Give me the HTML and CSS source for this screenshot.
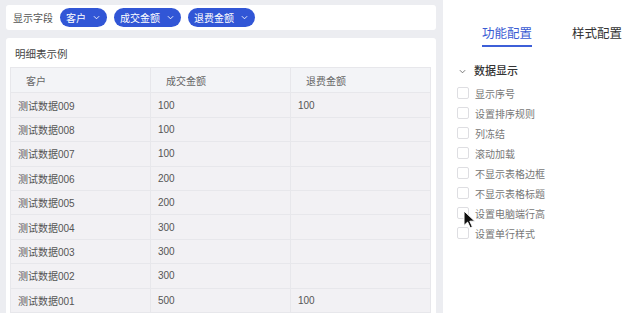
FILE: index.html
```html
<!DOCTYPE html>
<html lang="zh-CN">
<head>
  <meta charset="UTF-8" />
  <meta name="viewport" content="width=device-width, initial-scale=1.0"/>
  <title>明细表配置</title>
  <link rel="stylesheet" href="styles.css">
</head>
<body>
  <div class="main">
    <div class="field-bar">
      <span class="field-label">显示字段</span>
      <span class="pill">客户<svg class="chev" viewBox="0 0 8 5"><path d="M1 1l3 3 3-3"/></svg></span>
      <span class="pill">成交金额<svg class="chev" viewBox="0 0 8 5"><path d="M1 1l3 3 3-3"/></svg></span>
      <span class="pill">退费金额<svg class="chev" viewBox="0 0 8 5"><path d="M1 1l3 3 3-3"/></svg></span>
    </div>

    <div class="detail-card">
      <div class="detail-title">明细表示例</div>
      <table class="detail-table">
        <thead>
          <tr><th>客户</th><th>成交金额</th><th>退费金额</th></tr>
        </thead>
        <tbody id="rows"></tbody>
      </table>
    </div>
  </div>

  <div class="side">
    <div class="tabs">
      <span class="tab active">功能配置</span>
      <span class="tab">样式配置</span>
    </div>
    <div class="group-title">
      <svg class="group-chev" viewBox="0 0 8 5"><path d="M1 1l3 3 3-3"/></svg>
      数据显示
    </div>
    <ul class="options" id="options"></ul>
  </div>

  <svg class="cursor" viewBox="0 0 12 19" width="12" height="19">
    <path d="M1 1v14.5l3.6-3.4 2.6 5.7 2.2-1-2.6-5.6h5z" fill="#111" stroke="#fff" stroke-width="1"/>
  </svg>

  <script>
    const rows = [
      ["测试数据009", "100", "100"],
      ["测试数据008", "100", ""],
      ["测试数据007", "100", ""],
      ["测试数据006", "200", ""],
      ["测试数据005", "200", ""],
      ["测试数据004", "300", ""],
      ["测试数据003", "300", ""],
      ["测试数据002", "300", ""],
      ["测试数据001", "500", "100"]
    ];

    const options = ["显示序号", "设置排序规则", "列冻结", "滚动加载", "不显示表格边框", "不显示表格标题", "设置电脑端行高", "设置单行样式"];

    const tbody = document.getElementById("rows");
    rows.forEach(r => {
      const tr = document.createElement("tr");
      r.forEach(v => {
        const td = document.createElement("td");
        td.textContent = v;
        tr.appendChild(td);
      });
      tbody.appendChild(tr);
    });

    // 配置项列表
    const list = document.getElementById("options");
    options.forEach(text => {
      const li = document.createElement("li");
      li.innerHTML = '<span class="box"></span><span>' + text + '</span>';
      list.appendChild(li);
    });
  </script>
</body>
</html>
```

FILE: styles.css
```css
body {
  margin: 0;
  height: 313px;
  overflow: hidden;
  background-color: #ecedf1;
  font-family: "Liberation Sans", "Noto Sans CJK SC", sans-serif;
  display: flex;
  position: relative;
}
.main {
  width: 430px;
  flex-shrink: 0;
  padding: 5px 0 0 6px;
  display: flex;
  flex-direction: column;
  gap: 8px;
}
.field-bar {
  height: 26px;
  background: #fff;
  border-radius: 3px;
  display: flex;
  align-items: center;
  gap: 7px;
  padding: 0 7px;
}
.field-label {
  font-size: 10px;
  color: #555;
}
.pill {
  height: 19px;
  border-radius: 10px;
  background: #3156d6;
  color: #fff;
  font-size: 10px;
  display: flex;
  align-items: center;
  gap: 7px;
  padding: 0 7px 0 6px;
}
.chev {
  width: 7px;
  height: 5px;
  fill: none;
  stroke: #fff;
  stroke-width: 1;
}
.detail-card {
  flex: 1;
  background: #fff;
  border-radius: 3px 3px 0 0;
  padding: 10px 5px 0 4px;
}
.detail-title {
  font-size: 10.5px;
  color: #444;
  line-height: 12px;
  padding-left: 5px;
  margin-bottom: 7px;
}
.detail-table {
  width: 421px;
  border-collapse: collapse;
  table-layout: fixed;
  font-size: 10px;
}
.detail-table th,
.detail-table td {
  border: 1px solid #e7e7eb;
  text-align: left;
  font-weight: normal;
  white-space: nowrap;
}
.detail-table th {
  height: 24px;
  background: #f3f4f7;
  color: #666;
  padding: 0 15px;
}
.detail-table td {
  height: 23.4px;
  background: #f2f1f4;
  color: #555;
  padding: 0 7px;
}
.side {
  flex: 1;
  margin-left: 7px;
  background: #fff;
}
.tabs {
  display: flex;
  gap: 40px;
  padding: 27px 0 0 39px;
}
.tab {
  font-size: 12.5px;
  line-height: 14px;
  color: #333;
  padding-bottom: 4px;
  border-bottom: 2px solid transparent;
}
.tab.active {
  color: #3a5bd3;
  border-bottom-color: #3d5fd8;
}
.group-title {
  margin-top: 17px;
  padding-left: 16px;
  display: flex;
  align-items: center;
  gap: 8px;
  font-size: 11px;
  font-weight: 500;
  color: #333;
  line-height: 14px;
}
.group-chev {
  width: 7px;
  height: 5px;
  fill: none;
  stroke: #666;
  stroke-width: 1;
}
.options {
  list-style: none;
  margin: 5px 0 0;
  padding: 0 0 0 14px;
}
.options li {
  height: 20px;
  display: flex;
  align-items: center;
  gap: 6px;
  font-size: 10px;
  color: #777;
}
.box {
  width: 10px;
  height: 10px;
  border: 1px solid #dedee2;
  border-radius: 2px;
  background: #fff;
}
.cursor {
  position: absolute;
  left: 463px;
  top: 210px;
}
```
